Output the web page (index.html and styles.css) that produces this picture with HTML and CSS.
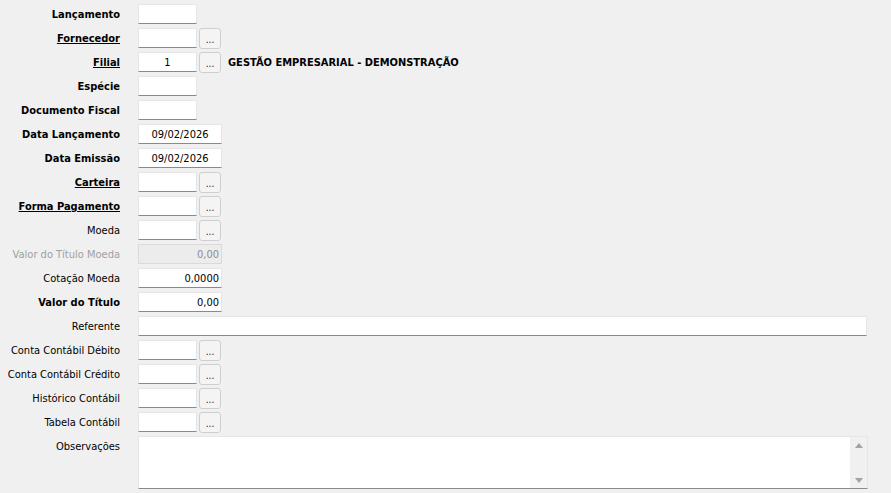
FILE: index.html
```html
<!DOCTYPE html>
<html lang="pt-BR">
<head>
<meta charset="utf-8">
<title>Lançamento</title>
<link rel="stylesheet" href="styles.css">
</head>
<body>
<form class="form">
  <div class="row"><label class="lbl b">Lançamento</label><div class="field"><span class="inp w58"></span></div></div>
  <div class="row"><label class="lbl b u">Fornecedor</label><div class="field"><span class="inp w58"></span><span class="btn">...</span></div></div>
  <div class="row"><label class="lbl b u">Filial</label><div class="field"><span class="inp w58 center">1</span><span class="btn">...</span><span class="desc">GESTÃO EMPRESARIAL - DEMONSTRAÇÃO</span></div></div>
  <div class="row"><label class="lbl b">Espécie</label><div class="field"><span class="inp w58"></span></div></div>
  <div class="row"><label class="lbl b">Documento Fiscal</label><div class="field"><span class="inp w58"></span></div></div>
  <div class="row"><label class="lbl b">Data Lançamento</label><div class="field"><span class="inp w83 center">09/02/2026</span></div></div>
  <div class="row"><label class="lbl b">Data Emissão</label><div class="field"><span class="inp w83 center">09/02/2026</span></div></div>
  <div class="row"><label class="lbl b u">Carteira</label><div class="field"><span class="inp w58"></span><span class="btn">...</span></div></div>
  <div class="row"><label class="lbl b u">Forma Pagamento</label><div class="field"><span class="inp w58"></span><span class="btn">...</span></div></div>
  <div class="row"><label class="lbl">Moeda</label><div class="field"><span class="inp w58"></span><span class="btn">...</span></div></div>
  <div class="row"><label class="lbl dis">Valor do Título Moeda</label><div class="field"><span class="inp w83 right disabled">0,00</span></div></div>
  <div class="row"><label class="lbl">Cotação Moeda</label><div class="field"><span class="inp w83 right">0,0000</span></div></div>
  <div class="row"><label class="lbl b">Valor do Título</label><div class="field"><span class="inp w83 right">0,00</span></div></div>
  <div class="row"><label class="lbl">Referente</label><div class="field"><span class="inp wide"></span></div></div>
  <div class="row"><label class="lbl">Conta Contábil Débito</label><div class="field"><span class="inp w58"></span><span class="btn">...</span></div></div>
  <div class="row"><label class="lbl">Conta Contábil Crédito</label><div class="field"><span class="inp w58"></span><span class="btn">...</span></div></div>
  <div class="row"><label class="lbl">Histórico Contábil</label><div class="field"><span class="inp w58"></span><span class="btn">...</span></div></div>
  <div class="row"><label class="lbl">Tabela Contábil</label><div class="field"><span class="inp w58"></span><span class="btn">...</span></div></div>
  <div class="row memo-row"><label class="lbl">Observações</label>
    <div class="memo">
      <div class="memo-text"></div>
      <div class="scroll"><span class="arr up"></span><span class="arr down"></span></div>
    </div>
  </div>
</form>
</body>
</html>
```
FILE: styles.css
```css
html, body {
  margin: 0;
  padding: 0;
  background: #f0f0f0;
}
body {
  width: 891px;
  height: 493px;
  overflow: hidden;
  font-family: "DejaVu Sans Condensed", "DejaVu Sans", sans-serif;
  font-size: 11px;
  color: #000;
}
.form {
  padding-top: 2px;
  display: flex;
  flex-direction: column;
}
.row {
  display: grid;
  grid-template-columns: 120px 1fr;
  column-gap: 18px;
  height: 24px;
  align-items: center;
}
.lbl {
  text-align: right;
  white-space: nowrap;
  line-height: 14px;
  padding-top: 2px;
}
.lbl.b { font-weight: bold; }
.lbl.u { text-decoration: underline; }
.lbl.dis { color: #a0a0a0; }
.field {
  display: flex;
  align-items: center;
  height: 24px;
}
.inp {
  box-sizing: border-box;
  height: 20px;
  background: #fff;
  border: 1px solid #e6e6e6;
  border-bottom: 1px solid #8a8a8a;
  line-height: 20px;
  padding: 0 2px;
  white-space: nowrap;
  overflow: hidden;
}
.w58 { width: 59px; }
.w83 { width: 84px; }
.wide { width: 729px; }
.center { text-align: center; }
.right { text-align: right; }
.inp.disabled {
  background: #ececec;
  border: 1px solid #dadada;
  color: #8c8c8c;
}
.btn {
  box-sizing: border-box;
  margin-left: 2px;
  width: 22px;
  height: 21px;
  border: 1px solid #cfcfcf;
  border-radius: 3px;
  background: #f4f4f4;
  font-size: 10px;
  line-height: 22px;
  text-align: center;
  color: #1a1a40;
}
.desc {
  margin-left: 7px;
  font-weight: bold;
  padding-top: 1px;
}
.memo-row {
  height: 56px;
  align-items: start;
}
.memo-row .lbl {
  padding-top: 6px;
}
.memo {
  margin-top: 2px;
  box-sizing: border-box;
  width: 730px;
  height: 53px;
  background: #fff;
  border: 1px solid #e6e6e6;
  border-bottom: 1px solid #8a8a8a;
  display: flex;
}
.memo-text {
  flex: 1;
}
.scroll {
  width: 17px;
  background: #f0f0f0;
  display: flex;
  flex-direction: column;
  justify-content: space-between;
  align-items: center;
  padding: 6px 0 5px;
}
.arr {
  width: 0;
  height: 0;
  border-left: 4px solid transparent;
  border-right: 4px solid transparent;
}
.arr.up { border-bottom: 5px solid #a3a3a3; }
.arr.down { border-top: 5px solid #a3a3a3; }
```
